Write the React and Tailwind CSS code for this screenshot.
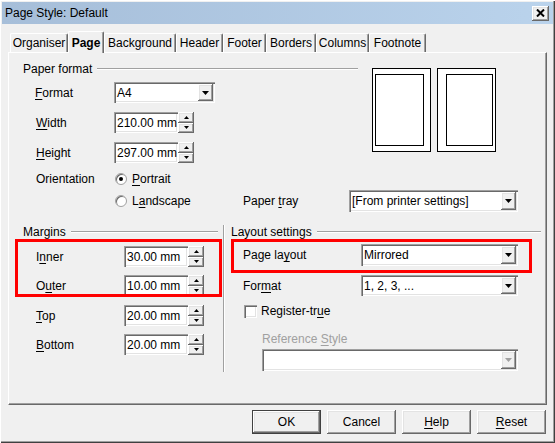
import React from 'react'

const sunken =
  'shadow-[inset_1px_1px_0_#a0a0a0,inset_2px_2px_0_#696969,inset_-1px_-1px_0_#ffffff,inset_-2px_-2px_0_#e3e3e3]'
const raised =
  'shadow-[inset_-1px_-1px_0_#696969,inset_1px_1px_0_#ffffff,inset_-2px_-2px_0_#a0a0a0,inset_2px_2px_0_#e3e3e3]'

const TABS = [
  { label: 'Organiser', w: 'w-[58px]' },
  { label: 'Page', w: 'w-[36px]', active: true },
  { label: 'Background', w: 'w-[72px]' },
  { label: 'Header', w: 'w-[47px]' },
  { label: 'Footer', w: 'w-[43px]' },
  { label: 'Borders', w: 'w-[50px]' },
  { label: 'Columns', w: 'w-[53px]' },
  { label: 'Footnote', w: 'w-[57px]' },
]

function U({ children }) {
  return <span className="underline underline-offset-[2px]">{children}</span>
}

function Arrow({ disabled }) {
  return (
    <svg width="7" height="4" viewBox="0 0 7 4">
      <polygon points="0,0 7,0 3.5,4" fill={disabled ? '#a0a0a0' : '#000'} />
    </svg>
  )
}

function Combo({ value, className = '', disabled }) {
  return (
    <div className={`flex items-center bg-white ${sunken} ${className}`}>
      <span className="flex-1 pl-[3px] whitespace-nowrap overflow-hidden">{value}</span>
      <div
        className={`w-[15px] self-stretch my-[2px] mr-[2px] flex items-center justify-center bg-[#f0f0f0] ${raised}`}
      >
        <Arrow disabled={disabled} />
      </div>
    </div>
  )
}

function SpinBtn({ up }) {
  return (
    <div className={`flex-1 flex items-center justify-center bg-[#f0f0f0] ${raised}`}>
      <svg width="5" height="3" viewBox="0 0 5 3">
        <polygon points={up ? '2.5,0 5,3 0,3' : '0,0 5,0 2.5,3'} fill="#000" />
      </svg>
    </div>
  )
}

function Spin({ value }) {
  return (
    <div className="flex h-[21px] w-[80px]">
      <div className={`w-[64px] bg-white flex items-center pl-[3px] whitespace-nowrap ${sunken}`}>{value}</div>
      <div className="w-[16px] flex flex-col">
        <SpinBtn up />
        <SpinBtn />
      </div>
    </div>
  )
}

function Radio({ checked }) {
  return (
    <div className="w-[12px] h-[12px] rounded-full bg-white border border-[#a0a0a0] shadow-[inset_1px_1px_0_#696969] flex items-center justify-center">
      {checked && <div className="w-[4px] h-[4px] rounded-full bg-black" />}
    </div>
  )
}

function GroupHeader({ label, className = '' }) {
  return (
    <div className={`flex items-center h-[14px] ${className}`}>
      <span className="whitespace-nowrap">{label}</span>
      <div className="flex-1 ml-[5px] h-0 border-t border-t-[#a0a0a0] border-b border-b-white" />
    </div>
  )
}

function Page({ inner }) {
  return (
    <div className={`w-[59px] h-[84px] border border-black bg-white flex ${inner}`}>
      <div className="flex-1 border border-black" />
    </div>
  )
}

function Button({ children, primary }) {
  return (
    <div
      className={`w-[69px] h-[24px] flex items-center justify-center bg-[#f0f0f0] ${
        primary ? 'border border-[#404040]' : ''
      } ${raised}`}
    >
      {children}
    </div>
  )
}

export default function App() {
  return (
    <div className="relative w-[555px] h-[443px] overflow-hidden bg-[#f0f0f0] text-[12px] leading-[14px] text-black font-['Liberation_Sans',Arial,sans-serif] shadow-[inset_1px_1px_0_#ffffff,inset_-1px_-1px_0_#404040,inset_-2px_-2px_0_#a0a0a0]">
      {/* title bar */}
      <div className="mx-[2px] mt-[2px] h-[22px] flex items-center justify-between bg-gradient-to-r from-[#a6bed9] to-[#bad3ec]">
        <span className="ml-[3px]">Page Style: Default</span>
        <div className={`mr-[4px] w-[17px] h-[15px] flex items-center justify-center bg-[#f0f0f0] ${raised}`}>
          <svg width="9" height="8" viewBox="0 0 9 8">
            <path d="M1 0.5 L8 7.5 M8 0.5 L1 7.5" stroke="#000" strokeWidth="2" />
          </svg>
        </div>
      </div>

      {/* tabs */}
      <div className="relative z-10 ml-[10px] mt-[7px] h-[21px] flex items-end">
        {TABS.map((t) =>
          t.active ? (
            <div
              key={t.label}
              className={`${t.w} h-[22px] -mb-px flex items-center justify-center font-bold bg-[#f0f0f0] border-l border-t border-white border-r border-r-[#696969] shadow-[inset_-1px_0_0_#a0a0a0] rounded-t-[2px]`}
            >
              {t.label}
            </div>
          ) : (
            <div
              key={t.label}
              className={`${t.w} h-[19px] flex items-center justify-center border-l border-t border-white border-r border-r-[#696969] shadow-[inset_-1px_0_0_#a0a0a0] rounded-t-[2px]`}
            >
              {t.label}
            </div>
          )
        )}
      </div>

      {/* panel */}
      <div className="ml-[8px] w-[539px] h-[353px] border border-t-white border-l-white border-r-[#696969] border-b-[#696969] shadow-[inset_-1px_-1px_0_#a0a0a0]">
        {/* paper format */}
        <div className="flex items-start">
          <div className="w-[349px] flex flex-col">
            <GroupHeader label="Paper format" className="mt-[9px] pl-[14px]" />
            <div className="mt-[6px] h-[21px] flex items-center pl-[26px]">
              <span className="w-[79px]">
                <U>F</U>ormat
              </span>
              <Combo value="A4" className="w-[101px] h-[21px]" />
            </div>
            <div className="mt-[9px] h-[21px] flex items-center pl-[27px]">
              <span className="w-[78px]">
                <U>W</U>idth
              </span>
              <Spin value="210.00 mm" />
            </div>
            <div className="mt-[9px] h-[21px] flex items-center pl-[27px]">
              <span className="w-[78px]">
                <U>H</U>eight
              </span>
              <Spin value="297.00 mm" />
            </div>
            <div className="mt-[8px] h-[16px] flex items-center pl-[27px]">
              <span className="w-[79px]">Orientation</span>
              <Radio checked />
              <span className="ml-[5px]">
                <U>P</U>ortrait
              </span>
            </div>
          </div>
          <div className="ml-[14px] mt-[15px] flex gap-[6px]">
            <Page inner="pl-[2px] pr-[6px] pt-[5px] pb-[5px]" />
            <Page inner="pl-[8px] pr-[2px] pt-[5px] pb-[5px]" />
          </div>
        </div>

        <div className="mt-[3px] h-[22px] flex items-center pl-[106px]">
          <div className="w-[128px] flex items-center">
            <Radio />
            <span className="ml-[5px]">
              L<U>a</U>ndscape
            </span>
          </div>
          <span className="w-[106px]">
            Paper <U>t</U>ray
          </span>
          <Combo value="[From printer settings]" className="w-[169px] h-[22px]" />
        </div>

        {/* margins + layout */}
        <div className="mt-[13px] flex items-start">
          <div className="w-[214px] flex flex-col">
            <GroupHeader label="Margins" className="pl-[14px] pr-[5px]" />
            <div className="mt-[7px] h-[21px] flex items-center pl-[27px]">
              <span className="w-[88px]">
                I<U>n</U>ner
              </span>
              <Spin value="30.00 mm" />
            </div>
            <div className="mt-[8px] h-[21px] flex items-center pl-[27px]">
              <span className="w-[88px]">
                O<U>u</U>ter
              </span>
              <Spin value="10.00 mm" />
            </div>
            <div className="mt-[9px] h-[21px] flex items-center pl-[27px]">
              <span className="w-[88px]">
                <U>T</U>op
              </span>
              <Spin value="20.00 mm" />
            </div>
            <div className="mt-[8px] h-[21px] flex items-center pl-[27px]">
              <span className="w-[88px]">
                <U>B</U>ottom
              </span>
              <Spin value="20.00 mm" />
            </div>
          </div>

          <div className="w-0 h-[147px] border-l border-l-[#a0a0a0] border-r border-r-white" />

          <div className="w-[320px] flex flex-col">
            <GroupHeader label="Layout settings" className="pl-[6px] pr-[4px]" />
            <div className="mt-[5px] h-[22px] flex items-center pl-[18px]">
              <span className="w-[118px]">
                Page la<U>y</U>out
              </span>
              <Combo value="Mirrored" className="w-[157px] h-[22px]" />
            </div>
            <div className="mt-[9px] h-[21px] flex items-center pl-[18px]">
              <span className="w-[118px]">
                For<U>m</U>at
              </span>
              <Combo value="1, 2, 3, ..." className="w-[157px] h-[21px]" />
            </div>
            <div className="mt-[8px] h-[14px] flex items-center pl-[19px]">
              <div className={`w-[13px] h-[13px] bg-white ${sunken}`} />
              <span className="ml-[4px]">
                Register-tr<U>u</U>e
              </span>
            </div>
            <div className="mt-[14px] h-[14px] flex items-center pl-[37px] text-[#a0a0a0]">
              <span>
                Reference <U>S</U>tyle
              </span>
            </div>
            <div className="mt-[3px] pl-[37px]">
              <Combo value="" disabled className="w-[256px] h-[22px]" />
            </div>
          </div>
        </div>
      </div>

      {/* buttons */}
      <div className="mt-[5px] pr-[9px] flex justify-end gap-[6px]">
        <Button primary>OK</Button>
        <Button>Cancel</Button>
        <Button>
          <span>
            <U>H</U>elp
          </span>
        </Button>
        <Button>
          <span>
            <U>R</U>eset
          </span>
        </Button>
      </div>

      {/* annotation boxes */}
      <div className="absolute left-[15px] top-[239px] w-[207px] h-[58px] border-[3px] border-[#ff0000] pointer-events-none" />
      <div className="absolute left-[231px] top-[239px] w-[301px] h-[34px] border-[3px] border-[#ff0000] pointer-events-none" />
    </div>
  )
}
